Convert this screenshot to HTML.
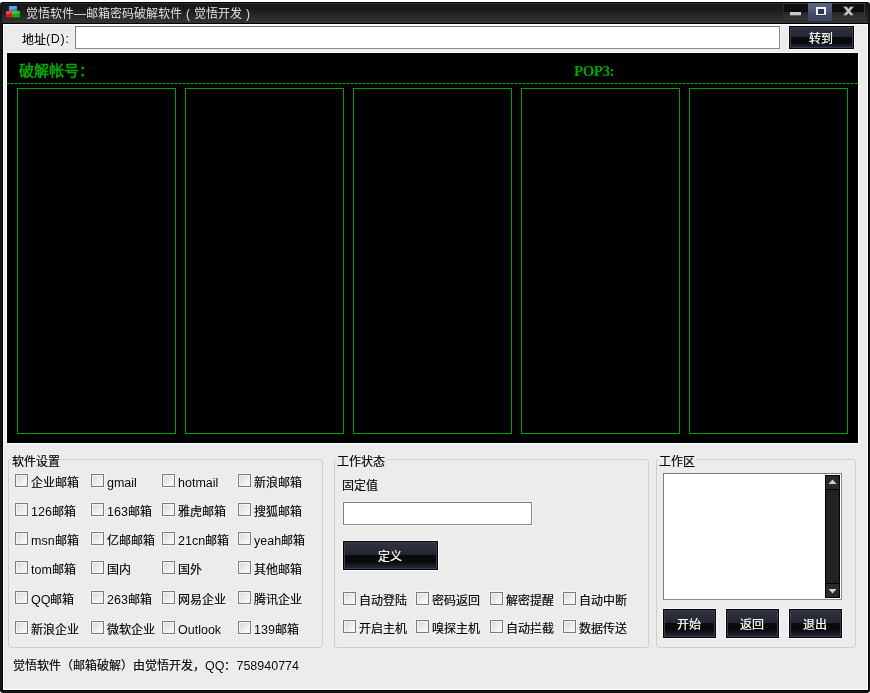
<!DOCTYPE html>
<html lang="zh-CN">
<head>
<meta charset="utf-8">
<title>觉悟软件</title>
<style>
*{box-sizing:border-box;margin:0;padding:0}
html,body{width:870px;height:693px;overflow:hidden;background:#fff}
body{position:relative;font-family:"Liberation Sans",sans-serif;font-size:12px;color:#000;line-height:14px}
.abs{position:absolute}
#frame{left:0;top:2px;width:870px;height:691px;background:#151515;border-top:1px solid #000;border-radius:3px}
#tbar{left:2px;top:3px;width:866px;height:20px;background:linear-gradient(#2e2e2e 0,#2a2a2a 1px,#1a1a1a 1.500px,#1a1a1a 6px,#353535 20px);border-radius:3px 3px 0 0}
#tline{left:2px;top:23px;width:866px;height:1px;background:#202020}
#title{left:25.500px;top:7px;color:#e0e0e0;white-space:nowrap;letter-spacing:0}
#client{left:3px;top:24px;width:865px;height:666px;background:#ececec;border:1px solid #fff;box-shadow:0 0 0 1px #000}
.inp{background:#fff;border:1px solid #7b7b7b;border-right-color:#8c8c8c;border-bottom-color:#8c8c8c;box-shadow:0 0 0 1px #f5f5f5}
.btn{border:1px solid #000;color:#fff;text-align:center;white-space:nowrap;padding:2px 2px 0 0;
 background:linear-gradient(#31333f 0%,#2a2c38 25%,#23252f 47%,#0a0a0a 48%,#0a0a0a 74%,#171a27 86%,#252a3e 100%);
 box-shadow:inset 0 0 0 1px #3a3e54,0 0 0 1px #fbfbfb}
#panel{left:7px;top:53px;width:851px;height:390px;background:#000;box-shadow:0 0 0 1px #fff}
.gtxt{color:#00a600;font-family:"Liberation Serif",serif;font-weight:bold;font-size:15px;line-height:16px;white-space:nowrap}
#dash{left:7px;top:83px;width:851px;height:1px;background:repeating-linear-gradient(90deg,#00a000 0,#00a000 3px,#000 3px,#000 4px)}
.gbox{top:88px;width:159px;height:346px;border:1px solid #00a000}
.grp{border:1px solid #d0d0bf;border-radius:3px}
.glab{background:#ececec;white-space:nowrap;padding:0 1px}
.cb{width:13px;height:13px;border:1px solid #7a7a7a;box-shadow:inset 0 0 0 1px #f4f4f2,0 0 0 1px #f5f5f5;background:linear-gradient(135deg,#d8d8d3 0%,#ebebe7 50%,#fff 100%)}
.lb{white-space:nowrap}
.lb,.glab,#title,.gtxt,.btn{will-change:transform}
.lb,.glab{-webkit-text-stroke:0.180px #000;text-shadow:0 0 1px #fff,0 0 1px #fff}
.btn{-webkit-text-stroke:0.200px #fff}
.pp{display:inline-block;width:12px;text-align:center}
.l{-webkit-text-stroke:0;font-size:12.500px}
</style>
</head>
<body>
<div id="frame" class="abs"></div>
<div id="tbar" class="abs"></div>
<div id="tline" class="abs"></div>
<!-- app icon -->
<svg class="abs" style="left:5px;top:5px" width="17" height="14" viewBox="0 0 17 14">
 <rect x="4" y="1" width="8" height="6" rx="0.800" fill="#3a8edb"/>
 <path d="M4.300 1.300h7.400v1.700l-7.400 2z" fill="#5eaae9"/>
 <rect x="1" y="6" width="6.200" height="6.600" rx="1" fill="#e01212"/>
 <path d="M1.300 6.300h5.700v1.500l-5.700 2z" fill="#f24a4a"/>
 <rect x="7" y="6" width="8" height="6.600" rx="1" fill="#14a814"/>
 <path d="M7.300 6.300h7.400v1.500l-7.400 2z" fill="#3fcc3f"/>
</svg>
<div id="title" class="abs">觉悟软件—邮箱密码破解软件<span class="pp">(</span>觉悟开发<span class="pp">)</span></div>
<!-- window buttons -->
<div class="abs" style="left:783px;top:3px;width:82px;height:18px;background:linear-gradient(#121212 0%,#0c0c0c 48%,#272727 54%,#363636 100%);border-radius:0 0 7px 3px;border-top:1px solid #3a3a3a;border-right:1px solid #3c3c3c;border-bottom:1px solid #2a2a2a;border-left:1px solid #2c2c2c"></div>
<div class="abs" style="left:808px;top:3px;width:24px;height:18px;background:linear-gradient(#5b6482 0%,#4e5674 50%,#434a66 55%,#3e4560 100%)"></div>
<div class="abs" style="left:790px;top:12px;width:11px;height:3px;background:#c8c8cc;box-shadow:0 1px 0 #555c78"></div>
<div class="abs" style="left:816px;top:7px;width:10px;height:8px;border:2px solid #f2f2f2;border-width:2px 2px 1px 2px;background:#2c3350;box-shadow:0 1px 0 #30364e"></div>
<svg class="abs" style="left:842px;top:6px" width="13" height="10" viewBox="0 0 13 10"><path d="M1 0.500h3.800l1.700 2.300 1.700-2.300h3.800l-3.600 4.500 3.600 4.500h-3.800l-1.700-2.300-1.700 2.300h-3.800l3.600-4.500z" fill="#c6c6c6" stroke="#3a4058" stroke-width="0.700"/></svg>

<div id="client" class="abs"></div>
<!-- address row -->
<div class="abs lb" style="left:22px;top:32px"><span style="position:relative;top:1px">地址</span><span class="l" style="letter-spacing:0.700px">(D):</span></div>
<div class="abs inp" style="left:75px;top:26px;width:705px;height:23px"></div>
<div class="abs btn" style="left:789px;top:26px;width:65px;height:23px;line-height:21px">转到</div>

<!-- black panel -->
<div id="panel" class="abs"></div>
<div class="abs gtxt" style="left:19px;top:63px">破解帐号：</div>
<div class="abs gtxt" style="left:574px;top:63px;letter-spacing:-0.500px">POP3:</div>
<div id="dash" class="abs"></div>
<div class="abs gbox" style="left:17px"></div>
<div class="abs gbox" style="left:185px"></div>
<div class="abs gbox" style="left:353px"></div>
<div class="abs gbox" style="left:521px"></div>
<div class="abs gbox" style="left:689px"></div>

<!-- group 1 -->
<div class="abs grp" style="left:8px;top:459px;width:315px;height:189px"></div>
<div class="abs glab" style="left:11px;top:455px">软件设置</div>
<!-- group 2 -->
<div class="abs grp" style="left:334px;top:459px;width:315px;height:189px"></div>
<div class="abs glab" style="left:336px;top:455px">工作状态</div>
<!-- group 3 -->
<div class="abs grp" style="left:656px;top:459px;width:200px;height:189px"></div>
<div class="abs glab" style="left:658px;top:455px">工作区</div>

<div id="g1">
<div class="abs cb" style="left:15px;top:474px"></div><div class="abs lb" style="left:31px;top:476px">企业邮箱</div>
<div class="abs cb" style="left:91px;top:474px"></div><div class="abs lb" style="left:107px;top:476px"><span class="l">gmail</span></div>
<div class="abs cb" style="left:162px;top:474px"></div><div class="abs lb" style="left:178px;top:476px"><span class="l">hotmail</span></div>
<div class="abs cb" style="left:238px;top:474px"></div><div class="abs lb" style="left:254px;top:476px">新浪邮箱</div>
<div class="abs cb" style="left:15px;top:503px"></div><div class="abs lb" style="left:31px;top:505px"><span class="l">126</span>邮箱</div>
<div class="abs cb" style="left:91px;top:503px"></div><div class="abs lb" style="left:107px;top:505px"><span class="l">163</span>邮箱</div>
<div class="abs cb" style="left:162px;top:503px"></div><div class="abs lb" style="left:178px;top:505px">雅虎邮箱</div>
<div class="abs cb" style="left:238px;top:503px"></div><div class="abs lb" style="left:254px;top:505px">搜狐邮箱</div>
<div class="abs cb" style="left:15px;top:532px"></div><div class="abs lb" style="left:31px;top:534px"><span class="l">msn</span>邮箱</div>
<div class="abs cb" style="left:91px;top:532px"></div><div class="abs lb" style="left:107px;top:534px">亿邮邮箱</div>
<div class="abs cb" style="left:162px;top:532px"></div><div class="abs lb" style="left:178px;top:534px"><span class="l">21cn</span>邮箱</div>
<div class="abs cb" style="left:238px;top:532px"></div><div class="abs lb" style="left:254px;top:534px"><span class="l">yeah</span>邮箱</div>
<div class="abs cb" style="left:15px;top:561px"></div><div class="abs lb" style="left:31px;top:563px"><span class="l">tom</span>邮箱</div>
<div class="abs cb" style="left:91px;top:561px"></div><div class="abs lb" style="left:107px;top:563px">国内</div>
<div class="abs cb" style="left:162px;top:561px"></div><div class="abs lb" style="left:178px;top:563px">国外</div>
<div class="abs cb" style="left:238px;top:561px"></div><div class="abs lb" style="left:254px;top:563px">其他邮箱</div>
<div class="abs cb" style="left:15px;top:591px"></div><div class="abs lb" style="left:31px;top:593px"><span class="l">QQ</span>邮箱</div>
<div class="abs cb" style="left:91px;top:591px"></div><div class="abs lb" style="left:107px;top:593px"><span class="l">263</span>邮箱</div>
<div class="abs cb" style="left:162px;top:591px"></div><div class="abs lb" style="left:178px;top:593px">网易企业</div>
<div class="abs cb" style="left:238px;top:591px"></div><div class="abs lb" style="left:254px;top:593px">腾讯企业</div>
<div class="abs cb" style="left:15px;top:621px"></div><div class="abs lb" style="left:31px;top:623px">新浪企业</div>
<div class="abs cb" style="left:91px;top:621px"></div><div class="abs lb" style="left:107px;top:623px">微软企业</div>
<div class="abs cb" style="left:162px;top:621px"></div><div class="abs lb" style="left:178px;top:623px"><span class="l">Outlook</span></div>
<div class="abs cb" style="left:238px;top:621px"></div><div class="abs lb" style="left:254px;top:623px"><span class="l">139</span>邮箱</div>
</div>
<div id="g2">
<div class="abs lb" style="left:342px;top:479px">固定值</div>
<div class="abs inp" style="left:343px;top:502px;width:189px;height:23px"></div>
<div class="abs btn" style="left:343px;top:541px;width:95px;height:29px;line-height:27px">定义</div>
<div class="abs cb" style="left:343px;top:592px"></div><div class="abs lb" style="left:359px;top:594px">自动登陆</div>
<div class="abs cb" style="left:416px;top:592px"></div><div class="abs lb" style="left:432px;top:594px">密码返回</div>
<div class="abs cb" style="left:490px;top:592px"></div><div class="abs lb" style="left:506px;top:594px">解密提醒</div>
<div class="abs cb" style="left:563px;top:592px"></div><div class="abs lb" style="left:579px;top:594px">自动中断</div>
<div class="abs cb" style="left:343px;top:620px"></div><div class="abs lb" style="left:359px;top:622px">开启主机</div>
<div class="abs cb" style="left:416px;top:620px"></div><div class="abs lb" style="left:432px;top:622px">嗅探主机</div>
<div class="abs cb" style="left:490px;top:620px"></div><div class="abs lb" style="left:506px;top:622px">自动拦截</div>
<div class="abs cb" style="left:563px;top:620px"></div><div class="abs lb" style="left:579px;top:622px">数据传送</div>
</div>
<div id="g3">
<div class="abs" style="left:663px;top:473px;width:179px;height:127px;background:#fff;border:1px solid #7b7b7b;border-right-color:#8c8c8c;border-bottom-color:#8c8c8c"></div>
<div class="abs" style="left:825px;top:475px;width:15px;height:123px;background:#222;border:1px solid #000"></div>
<div class="abs" style="left:826px;top:476px;width:13px;height:13px;background:#2a2a2a"></div>
<div class="abs" style="left:826px;top:489px;width:13px;height:1px;background:#000"></div>
<div class="abs" style="left:826px;top:583px;width:13px;height:1px;background:#000"></div>
<div class="abs" style="left:826px;top:584px;width:13px;height:13px;background:#2a2a2a"></div>
<svg class="abs" style="left:828px;top:479px" width="9" height="6" viewBox="0 0 9 6"><path d="M4.500 0.500L8.500 5H0.500z" fill="#cfcfcf"/></svg>
<svg class="abs" style="left:828px;top:588px" width="9" height="6" viewBox="0 0 9 6"><path d="M0.500 1H8.500L4.500 5.500z" fill="#cfcfcf"/></svg>
<div class="abs btn" style="left:663px;top:609px;width:53px;height:29px;line-height:27px">开始</div>
<div class="abs btn" style="left:726px;top:609px;width:53px;height:29px;line-height:27px">返回</div>
<div class="abs btn" style="left:789px;top:609px;width:53px;height:29px;line-height:27px">退出</div>
</div>

<div class="abs lb" style="left:13px;top:659px">觉悟软件（邮箱破解）由觉悟开发，<span class="l">QQ</span>：<span class="l">758940774</span></div>
</body>
</html>
